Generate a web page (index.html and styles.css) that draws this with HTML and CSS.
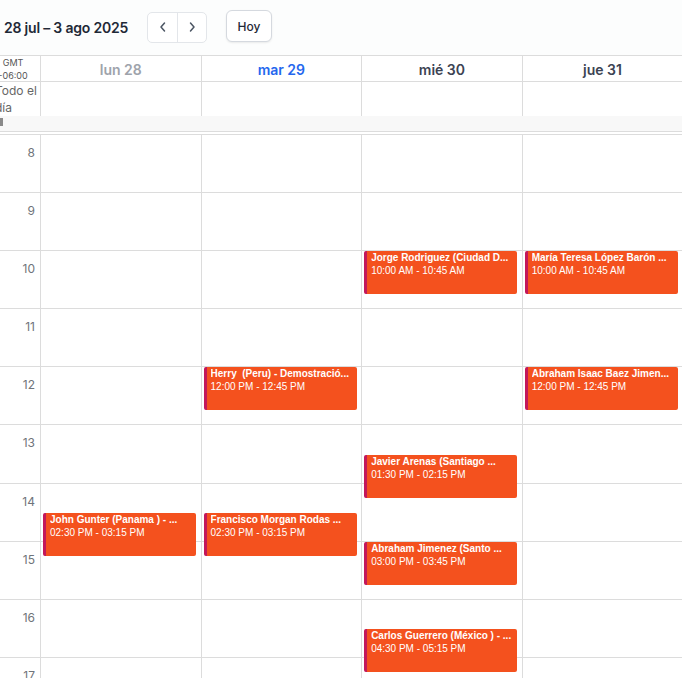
FILE: index.html
```html
<!DOCTYPE html>
<html lang="es">
<head>
<meta charset="utf-8">
<title>Calendario semanal</title>
<link rel="stylesheet" href="styles.css">
</head>
<body>
<div class="app">
  <header class="toolbar">
    <h1 class="range">28 jul – 3 ago 2025</h1>
    <div class="nav">
      <button class="nav-btn" aria-label="Semana anterior">
        <svg width="10" height="12" viewBox="0 0 10 12"><path d="M6.5 2 L3 6 L6.5 10" fill="none" stroke="#4b5563" stroke-width="1.5" stroke-linecap="round" stroke-linejoin="round"/></svg>
      </button>
      <button class="nav-btn" aria-label="Semana siguiente">
        <svg width="10" height="12" viewBox="0 0 10 12"><path d="M3.5 2 L7 6 L3.5 10" fill="none" stroke="#4b5563" stroke-width="1.5" stroke-linecap="round" stroke-linejoin="round"/></svg>
      </button>
    </div>
    <button class="today">Hoy</button>
  </header>

  <div class="cal">
    <div class="grid head">
      <div class="tz"><span>GMT</span><span>-06:00</span></div>
      <div class="day past">lun 28</div>
      <div class="day current">mar 29</div>
      <div class="day">mié 30</div>
      <div class="day">jue 31</div>
      <div class="day">vie 1</div>
      <div class="day">sáb 2</div>
      <div class="day">dom 3</div>
    </div>

    <div class="grid allday">
      <div class="allday-label">Todo el día</div>
      <div class="allday-cell"></div>
      <div class="allday-cell"></div>
      <div class="allday-cell"></div>
      <div class="allday-cell"></div>
      <div class="allday-cell"></div>
      <div class="allday-cell"></div>
      <div class="allday-cell"></div>
    </div>

    <div class="divider"><span class="handle"></span></div>

    <div class="grid body">
      <div class="gutter">
        <div class="slot"><span class="hour">8</span></div>
        <div class="slot"><span class="hour">9</span></div>
        <div class="slot"><span class="hour">10</span></div>
        <div class="slot"><span class="hour">11</span></div>
        <div class="slot"><span class="hour">12</span></div>
        <div class="slot"><span class="hour">13</span></div>
        <div class="slot"><span class="hour">14</span></div>
        <div class="slot"><span class="hour">15</span></div>
        <div class="slot"><span class="hour">16</span></div>
        <div class="slot"><span class="hour">17</span></div>
        <div class="slot"><span class="hour">18</span></div>
      </div>

      <!-- lun 28 -->
      <div class="col">
        <div class="slot"></div><div class="slot"></div><div class="slot"></div><div class="slot"></div><div class="slot"></div><div class="slot"></div><div class="slot"></div><div class="slot"></div><div class="slot"></div><div class="slot"></div><div class="slot"></div>
        <div class="event" style="top:377.7px;height:43px">
          <div class="ev-title">John Gunter (Panama ) - ...</div>
          <div class="ev-time">02:30 PM - 03:15 PM</div>
        </div>
      </div>

      <!-- mar 29 -->
      <div class="col">
        <div class="slot"></div><div class="slot"></div><div class="slot"></div><div class="slot"></div><div class="slot"></div><div class="slot"></div><div class="slot"></div><div class="slot"></div><div class="slot"></div><div class="slot"></div><div class="slot"></div>
        <div class="event" style="top:232.4px;height:43px">
          <div class="ev-title">Herry&nbsp; (Peru) - Demostració...</div>
          <div class="ev-time">12:00 PM - 12:45 PM</div>
        </div>
        <div class="event" style="top:377.7px;height:43px">
          <div class="ev-title">Francisco Morgan Rodas ...</div>
          <div class="ev-time">02:30 PM - 03:15 PM</div>
        </div>
      </div>

      <!-- mié 30 -->
      <div class="col">
        <div class="slot"></div><div class="slot"></div><div class="slot"></div><div class="slot"></div><div class="slot"></div><div class="slot"></div><div class="slot"></div><div class="slot"></div><div class="slot"></div><div class="slot"></div><div class="slot"></div>
        <div class="event" style="top:116.2px;height:43px">
          <div class="ev-title">Jorge Rodriguez (Ciudad D...</div>
          <div class="ev-time">10:00 AM - 10:45 AM</div>
        </div>
        <div class="event" style="top:319.6px;height:43px">
          <div class="ev-title">Javier Arenas (Santiago ...</div>
          <div class="ev-time">01:30 PM - 02:15 PM</div>
        </div>
        <div class="event" style="top:406.7px;height:43px">
          <div class="ev-title">Abraham Jimenez (Santo ...</div>
          <div class="ev-time">03:00 PM - 03:45 PM</div>
        </div>
        <div class="event" style="top:493.9px;height:43px">
          <div class="ev-title">Carlos Guerrero (México ) - ...</div>
          <div class="ev-time">04:30 PM - 05:15 PM</div>
        </div>
      </div>

      <!-- jue 31 -->
      <div class="col">
        <div class="slot"></div><div class="slot"></div><div class="slot"></div><div class="slot"></div><div class="slot"></div><div class="slot"></div><div class="slot"></div><div class="slot"></div><div class="slot"></div><div class="slot"></div><div class="slot"></div>
        <div class="event" style="top:116.2px;height:43px">
          <div class="ev-title">María Teresa López Barón ...</div>
          <div class="ev-time">10:00 AM - 10:45 AM</div>
        </div>
        <div class="event" style="top:232.4px;height:43px">
          <div class="ev-title">Abraham Isaac Baez Jimen...</div>
          <div class="ev-time">12:00 PM - 12:45 PM</div>
        </div>
      </div>

      <!-- vie 1 -->
      <div class="col">
        <div class="slot"></div><div class="slot"></div><div class="slot"></div><div class="slot"></div><div class="slot"></div><div class="slot"></div><div class="slot"></div><div class="slot"></div><div class="slot"></div><div class="slot"></div><div class="slot"></div>
      </div>

      <!-- sáb 2 -->
      <div class="col">
        <div class="slot"></div><div class="slot"></div><div class="slot"></div><div class="slot"></div><div class="slot"></div><div class="slot"></div><div class="slot"></div><div class="slot"></div><div class="slot"></div><div class="slot"></div><div class="slot"></div>
      </div>

      <!-- dom 3 -->
      <div class="col">
        <div class="slot"></div><div class="slot"></div><div class="slot"></div><div class="slot"></div><div class="slot"></div><div class="slot"></div><div class="slot"></div><div class="slot"></div><div class="slot"></div><div class="slot"></div><div class="slot"></div>
      </div>
    </div>
  </div>
</div>
</body>
</html>
```

FILE: styles.css
```css
* {
  box-sizing: border-box;
}

html,
body {
  margin: 0;
  height: 100%;
  overflow: hidden;
  background: #fff;
}

body {
  font-family: Inter, "Noto Sans", "Liberation Sans", sans-serif;
  color: #1f2937;
}

.app {
  width: 682px;
  overflow: hidden;
}

/* ---- toolbar ---- */
.toolbar {
  height: 55px;
  display: flex;
  align-items: center;
  padding-left: 4px;
  background: #fcfdfd;
}

.range {
  margin: 0;
  width: 143px;
  font-size: 14px;
  font-weight: 600;
  letter-spacing: -0.2px;
  white-space: nowrap;
  color: #1f2937;
}

.nav {
  display: flex;
  margin-top: -1px;
  height: 31px;
  border: 1px solid #e3e6ea;
  border-radius: 5px;
  background: #fff;
}

.nav-btn {
  width: 29px;
  padding: 0;
  border: 0;
  background: none;
  display: flex;
  align-items: center;
  justify-content: center;
}

.nav-btn + .nav-btn {
  border-left: 1px solid #e3e6ea;
}

.today {
  margin-left: 19px;
  margin-top: -3px;
  width: 46px;
  height: 32px;
  padding: 0;
  border: 1px solid #d5d9df;
  border-radius: 6px;
  background: #fff;
  box-shadow: 0 1px 2px rgba(0, 0, 0, 0.08);
  font-family: Inter, "Noto Sans", sans-serif;
  font-size: 12px;
  font-weight: 500;
  color: #1f2937;
}

/* ---- week grid ---- */
.cal {
  margin-left: -16px;
  width: 1180px;
}

.grid {
  display: grid;
  grid-template-columns: 56px repeat(7, 160.57px);
}

.head {
  height: 27px;
  border-top: 1px solid #dcdcdc;
  border-bottom: 1px solid #dcdcdc;
}

.tz {
  display: flex;
  flex-direction: column;
  align-items: center;
  padding-left: 2px;
  font-size: 9px;
  line-height: 13px;
  color: #555;
}

.day {
  border-left: 1px solid #dcdcdc;
  display: flex;
  align-items: center;
  justify-content: center;
  font-size: 14px;
  font-weight: 600;
  color: #3c4353;
}

.day.past {
  color: #9ea3ab;
}

.day.current {
  color: #2467ee;
}

.allday {
  height: 34px;
}

.allday-label {
  padding-left: 11px;
  font-size: 12px;
  line-height: 17px;
  color: #666;
}

.allday-cell {
  border-left: 1px solid #dcdcdc;
}

/* strip between the all-day row and the hourly grid */
.divider {
  position: relative;
  height: 16px;
  margin-bottom: 2px;
  background: #f8f8f8;
  border-bottom: 1px solid #dcdcdc;
}

.handle {
  position: absolute;
  left: 16px;
  top: 2px;
  width: 3px;
  height: 8px;
  background: #8a8a8a;
}

.body {
  border-top: 1px solid #dcdcdc;
}

.slot {
  height: 58.1px;
  border-bottom: 1px solid #dcdcdc;
}

.gutter .slot {
  text-align: right;
  padding-right: 5px;
  padding-top: 6px;
}

.hour {
  font-size: 12px;
  line-height: 14px;
  color: #6f747a;
}

.col {
  position: relative;
  border-left: 1px solid #dcdcdc;
}

/* ---- events ---- */
.event {
  position: absolute;
  left: 2px;
  width: 153px;
  padding-left: 4px;
  background: #f4511e;
  border-left: 3px solid #c2185b;
  border-radius: 2px;
  overflow: hidden;
  font-family: "Liberation Sans", Arial, sans-serif;
  font-size: 10px;
  line-height: 13px;
  color: #fff;
}

.ev-title {
  font-weight: 700;
  white-space: pre;
  overflow: hidden;
}

.ev-time {
  white-space: nowrap;
}
```
